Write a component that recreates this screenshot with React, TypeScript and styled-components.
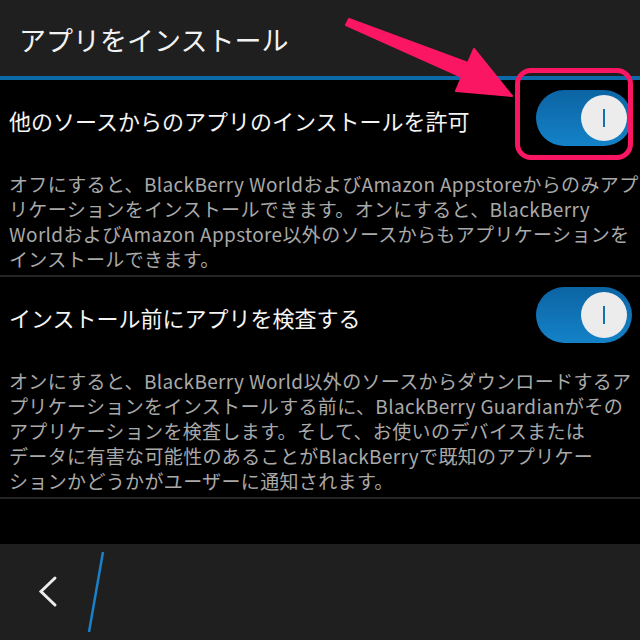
import React from "react";
import styled, { createGlobalStyle } from "styled-components";

const Global = createGlobalStyle`
  html, body { margin: 0; padding: 0; background: #000; }
  body { font-family: "Noto Sans CJK JP", "Noto Sans", sans-serif; }
`;

const Screen = styled.div`
  position: relative;
  width: 640px;
  height: 640px;
  overflow: hidden;
  background: #000;
  display: flex;
  flex-direction: column;
`;

const Header = styled.header`
  height: 76px;
  flex: none;
  background: #1f1f1f;
  display: flex;
  align-items: center;
  padding: 2px 0 0 19px;
  box-sizing: border-box;
  color: #f2f2f2;
  font-size: 27px;
`;

const AccentLine = styled.div`
  height: 4px;
  flex: none;
  background: #0d6aa8;
`;

const Row = styled.div`
  height: 76px;
  flex: none;
  display: flex;
  align-items: center;
  justify-content: space-between;
  padding: 0 8px 0 9px;
  box-sizing: border-box;
`;

const Label = styled.span<{ $dy: number }>`
  color: #f4f4f4;
  font-size: 22px;
  position: relative;
  top: ${(p) => p.$dy}px;
`;

const Toggle = styled.div`
  width: 96px;
  height: 56px;
  border-radius: 28px;
  background: linear-gradient(#0c64a3, #1482c8);
  display: flex;
  align-items: center;
  justify-content: flex-end;
  padding-right: 5px;
  box-sizing: border-box;
  flex: none;
`;

const Knob = styled.div`
  width: 46px;
  height: 46px;
  border-radius: 50%;
  background: #ececec;
  display: flex;
  align-items: center;
  justify-content: center;
`;

const KnobBar = styled.div`
  width: 2px;
  height: 18px;
  background: #1570b0;
`;

const Description = styled.div`
  padding: 15px 0 4px 9px;
  color: #a9a9a9;
  font-size: 19px;
  line-height: 25px;
  letter-spacing: 0.35px;
  flex: none;
`;

const Line = styled.div`
  white-space: nowrap;
`;

const Divider = styled.div`
  height: 2px;
  flex: none;
  background: #242424;
`;

const Spacer = styled.div`
  flex: 1;
`;

const BottomBar = styled.footer`
  height: 96px;
  flex: none;
  background: #1f1f1f;
`;

const Overlay = styled.svg`
  position: absolute;
  left: 0;
  top: 0;
  pointer-events: none;
`;

const Highlight = styled.div`
  position: absolute;
  left: 515px;
  top: 68px;
  width: 118px;
  height: 92px;
  border: 5px solid #fb1664;
  border-radius: 16px;
  box-sizing: border-box;
`;

const Switch = () => (
  <Toggle>
    <Knob>
      <KnobBar />
    </Knob>
  </Toggle>
);

export default function App() {
  return (
    <>
      <Global />
      <Screen>
        <Header>アプリをインストール</Header>
        <AccentLine />
        <Row>
          <Label $dy={2}>他のソースからのアプリのインストールを許可</Label>
          <Switch />
        </Row>
        <Description>
          <Line>オフにすると、BlackBerry WorldおよびAmazon Appstoreからのみアプ</Line>
          <Line>リケーションをインストールできます。オンにすると、BlackBerry</Line>
          <Line>WorldおよびAmazon Appstore以外のソースからもアプリケーションを</Line>
          <Line>インストールできます。</Line>
        </Description>
        <Divider />
        <Row>
          <Label $dy={2}>インストール前にアプリを検査する</Label>
          <Switch />
        </Row>
        <Description>
          <Line>オンにすると、BlackBerry World以外のソースからダウンロードするア</Line>
          <Line>プリケーションをインストールする前に、BlackBerry Guardianがその</Line>
          <Line>アプリケーションを検査します。そして、お使いのデバイスまたは</Line>
          <Line>データに有害な可能性のあることがBlackBerryで既知のアプリケー</Line>
          <Line>ションかどうかがユーザーに通知されます。</Line>
        </Description>
        <Divider />
        <Spacer />
        <BottomBar />
        <Highlight />
        <Overlay width="640" height="640" viewBox="0 0 640 640">
          <polygon
            points="349,19 468,63 474,49 512,96 456,91 462,77 346,25"
            fill="#fb1664"
            stroke="#fb1664"
            strokeWidth="2"
            strokeLinejoin="round"
          />
          <polyline
            points="55,578 41,591.5 55,605"
            fill="none"
            stroke="#ececec"
            strokeWidth="3"
            strokeLinecap="round"
            strokeLinejoin="miter"
          />
          <line x1="103" y1="552" x2="89" y2="632" stroke="#1a80c8" strokeWidth="2.5" />
        </Overlay>
      </Screen>
    </>
  );
}
